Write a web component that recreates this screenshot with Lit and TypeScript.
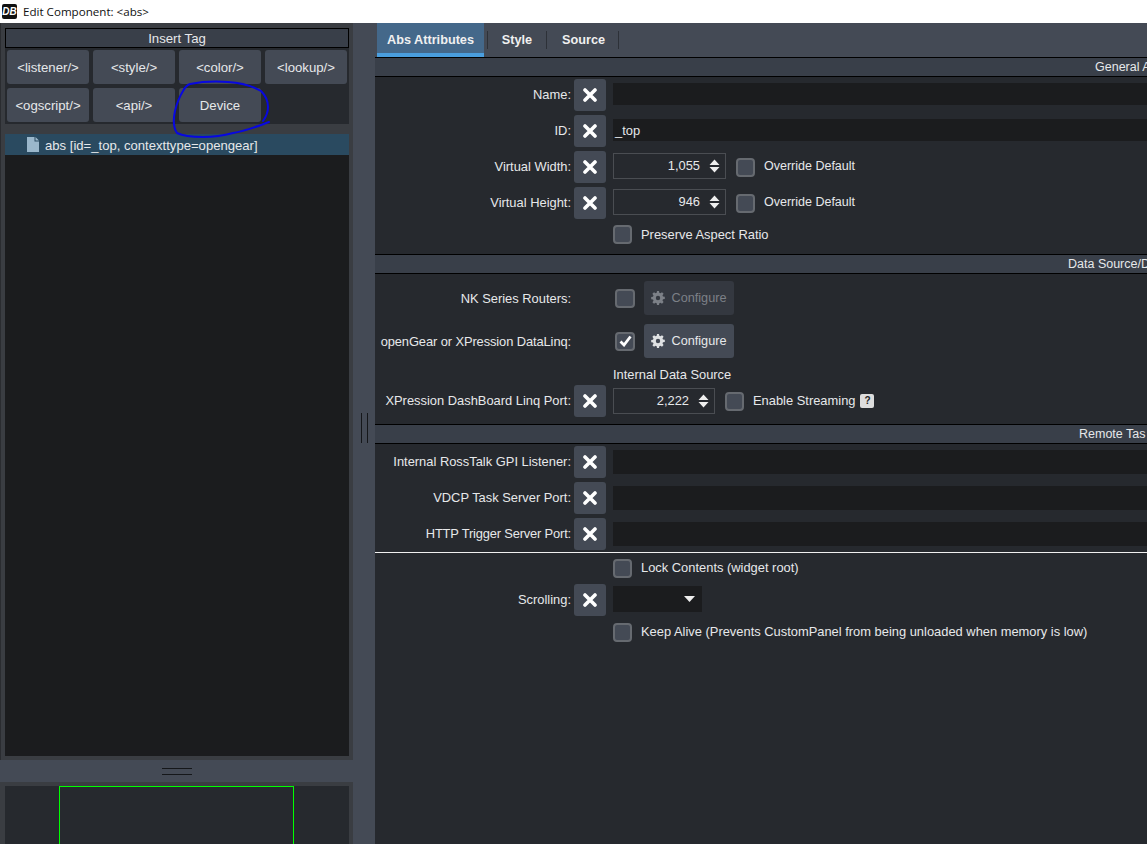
import { LitElement, html, css, svg } from "lit";
import { customElement } from "lit/decorators.js";

const xIcon = html`<svg width="14" height="14" viewBox="0 0 14 14"><path d="M2 2 L12 12 M12 2 L2 12" stroke="#fff" stroke-width="3.6" stroke-linecap="round"/></svg>`;
const gearPath = svg`<path fill-rule="evenodd" d="M6 0h2l.3 1.8 1.2.5L11 1.2l1.6 1.6-1.1 1.5.5 1.2 1.8.3v2.2l-1.8.3-.5 1.2 1.1 1.5L11 12.8l-1.5-1.1-1.2.5L8 14H6l-.3-1.8-1.2-.5L3 12.8 1.4 11.2l1.1-1.5-.5-1.2L.2 8.200V6l1.800-.3.5-1.200L1.400 2.800 3 1.200l1.500 1.100 1.200-.5zM7 4.800a2.200 2.200 0 1 0 0 4.400 2.200 2.200 0 0 0 0-4.400z"/>`;

@customElement("app-root")
export class AppRoot extends LitElement {
  static styles = css`
    :host { display: block; width: 1147px; height: 844px; overflow: hidden; position: relative; background: #26292e; font-family: "Liberation Sans", Arial, sans-serif; font-size: 12.900px; color: #e6e8ea; }
    .title { height: 23px; background: #fff; color: #111; display: flex; align-items: center; font-family: "Open Sans", sans-serif; font-size: 11.600px; }
    .logo { width: 15px; height: 15px; margin: 0 6px 0 2px; background: #111; border-radius: 2px; color: #fff; font: italic bold 10px/15px "Liberation Sans", sans-serif; text-align: center; }
    .main { display: flex; height: 821px; }
    .left { width: 353px; display: flex; flex-direction: column; flex: none; }
    .vsplit { width: 22px; flex: none; background: #444a55; display: flex; align-items: center; justify-content: center; gap: 5px; padding-bottom: 11px; box-sizing: border-box; }
    .vsplit i { width: 1px; height: 30px; background: #15171a; }
    .right { flex: 1; min-width: 0; overflow: hidden; }
    .top { height: 737px; box-sizing: border-box; background: #3a3d42; padding: 5px 4px 4px 4px; display: flex; flex-direction: column; border-left: 1px solid #2a2c30; }
    .ins { height: 20px; box-sizing: border-box; border: 1px solid #000; background: #393f49; text-align: center; line-height: 19px; font-size: 13.200px; }
    .grid { height: 76px; box-sizing: border-box; background: #26292e; padding: 2px; display: grid; grid-template-columns: repeat(4, 82px); grid-auto-rows: 34px; gap: 4px; }
    .tag { background: #444a55; border-radius: 3px; display: flex; align-items: center; justify-content: center; font-size: 13.200px; padding-top: 1px; box-sizing: border-box; }
    .tree { margin-top: 10px; flex: 1; background: #1b1c1e; }
    .sel { height: 21px; background: #2a4a60; display: flex; align-items: center; padding-left: 22px; gap: 6px; font-size: 13.100px; }
    .sel span { padding-top: 1px; }
    .hsplit { height: 22px; background: #444a55; display: flex; flex-direction: column; align-items: center; justify-content: center; gap: 5px; }
    .hsplit i { width: 30px; height: 1px; background: #15171a; }
    .bottom { flex: 1; background: #3a3d42; padding: 4px 4px 0 5px; display: flex; }
    .canvas { flex: 1; background: #26292e; padding-left: 54px; }
    .view { width: 235px; height: 100%; box-sizing: border-box; border: 1px solid #0f0; border-bottom: 0; }
    .tabs { height: 34px; background: #444a55; display: flex; padding-left: 2px; font-weight: bold; font-size: 12.700px; color: #f0f0f0; }
    .tab { display: flex; align-items: center; box-sizing: border-box; height: 34px; position: relative; }
    .tab.on { width: 107px; justify-content: center; background: #44688a; border-bottom: 4px solid #4a9ede; padding-top: 4px; }
    .tab.style { width: 60px; margin-left: 3px; justify-content: center; border-left: 1px solid #2d3138; border-right: 1px solid #2d3138; height: 18px; align-self: center; }
    .tab.src { width: 72px; justify-content: center; border-right: 1px solid #2d3138; height: 18px; align-self: center; padding-left: 2px; }
    .sec { height: 20px; box-sizing: border-box; border-top: 1px solid #000; border-bottom: 1px solid #000; background: #393f49; line-height: 18px; white-space: nowrap; font-size: 12.500px; overflow: hidden; }
    .s1 { padding-left: 720px; } .s2 { padding-left: 693px; margin-top: 10px; } .s3 { padding-left: 704px; margin-top: 7px; }
    .rows { padding-top: 2px; display: flex; flex-direction: column; gap: 4px; }
    .row { display: grid; grid-template-columns: 196px 32px 1fr; column-gap: 3px; align-items: center; height: 32px; }
    .lb { text-align: right; white-space: nowrap; }
    .row .lb { padding-bottom: 2px; }
    .lb.tight { letter-spacing: -0.100px; }
    .lb.tighter { letter-spacing: -0.170px; }
    .x { width: 32px; height: 32px; background: #444a55; border-radius: 3px; display: flex; align-items: center; justify-content: center; }
    .f { margin-left: 4px; display: flex; align-items: center; min-width: 0; }
    .f > .txt { padding-bottom: 2px; }
    .txt.nar { font-size: 12.500px; }
    .inp { flex: 1; height: 22px; background: #1b1c1e; margin-top: -2px; padding-left: 2px; line-height: 24px; }
    .inp.t { height: 24px; margin-top: 0; }
    .spin { height: 26px; width: 113px; box-sizing: border-box; border: 1px solid #4a4d52; margin-top: -2px; display: flex; align-items: center; justify-content: flex-end; gap: 9px; padding-right: 5px; }
    .spin.p { width: 102px; margin-top: 0; }
    .spin span { margin-top: -1px; }
    .ar { display: block; }
    .cb { width: 19px; height: 19px; box-sizing: border-box; border: 2px solid #666a70; background: #444a55; border-radius: 4px; flex: none; display: flex; align-items: center; justify-content: center; }
    .f .cb { margin: 0 9px 0 10px; }
    .solo { height: 20px; display: flex; align-items: center; padding-left: 238px; margin-top: 5px; gap: 9px; }
    .conf { height: 34px; display: grid; grid-template-columns: 196px 1fr; align-items: center; column-gap: 44px; }
    .conf .inner { display: flex; align-items: center; gap: 9px; }
    .conf .cb { width: 20px; }
    .conf.a { margin-top: 7px; } .conf.b { margin-top: 9px; }
    .btn { width: 90px; height: 34px; background: #444a55; border-radius: 3px; display: flex; align-items: center; justify-content: center; gap: 6px; fill: #dfe1e3; font-size: 12.700px; }
    .btn.off { background: #343840; color: #7c8087; fill: #7c8087; }
    .ids { height: 16px; margin: 9px 0 2px 238px; line-height: 16px; }
    .q { width: 14px; height: 14px; margin-left: 5px; background: #ddd; color: #222; font-weight: bold; font-size: 10px; line-height: 14px; text-align: center; border-radius: 2px; }
    .hr { height: 1px; background: #f0f0f0; margin-top: 2px; }
    .sel2 { width: 89px; height: 26px; background: #1b1c1e; display: flex; justify-content: flex-end; align-items: center; padding-right: 7px; box-sizing: border-box; margin-top: -2px; }
    .lock { margin-top: 5px; }
    .mt6 { margin-top: 6px; }
    .up { margin-top: -2px; }
    .ink { position: absolute; left: 0; top: 0; pointer-events: none; }
  `;

  private btnRow(label: string, body: unknown, cls = "") {
    return html`<div class="row"><div class="lb ${cls}">${label}</div><div class="x">${xIcon}</div><div class="f">${body}</div></div>`;
  }

  private arrows() {
    return html`<svg class="ar" width="11" height="14" viewBox="0 0 11 14"><path d="M5.500 0.500L10.500 6H.5zM.5 8h10l-5 5.500z" fill="#eee"/></svg>`;
  }

  private spin(v: string, p = false) {
    return html`<div class="spin ${p ? "p" : ""}"><span>${v}</span>${this.arrows()}</div>`;
  }

  private gear() {
    return html`<svg width="14" height="14" viewBox="0 0 14 14">${gearPath}</svg>`;
  }

  render() {
    const tags = ["<listener/>", "<style/>", "<color/>", "<lookup/>", "<ogscript/>", "<api/>", "Device"];
    return html`
      <div class="title"><span class="logo">DB</span>Edit Component: &lt;abs&gt;</div>
      <div class="main">
        <div class="left">
          <div class="top">
            <div class="ins">Insert Tag</div>
            <div class="grid">${tags.map((t) => html`<div class="tag">${t}</div>`)}</div>
            <div class="tree">
              <div class="sel">
                <svg width="12" height="15" viewBox="0 0 12 15"><path d="M0 0h7.500v4.500H12V15H0zM8.500 0L12 3.500H8.500z" fill="#9ab7cb"/></svg>
                <span>abs [id=_top, contexttype=opengear]</span>
              </div>
            </div>
          </div>
          <div class="hsplit"><i></i><i></i></div>
          <div class="bottom"><div class="canvas"><div class="view"></div></div></div>
        </div>
        <div class="vsplit"><i></i><i></i></div>
        <div class="right">
          <div class="tabs">
            <div class="tab on">Abs Attributes</div>
            <div class="tab style">Style</div>
            <div class="tab src">Source</div>
          </div>
          <div class="sec s1">General A</div>
          <div class="rows">
            ${this.btnRow("Name:", html`<div class="inp"></div>`)}
            ${this.btnRow("ID:", html`<div class="inp">_top</div>`)}
            ${this.btnRow("Virtual Width:", html`${this.spin("1,055")}<span class="cb"></span><span class="txt nar">Override Default</span>`)}
            ${this.btnRow("Virtual Height:", html`${this.spin("946")}<span class="cb"></span><span class="txt nar">Override Default</span>`)}
          </div>
          <div class="solo"><span class="cb"></span><span>Preserve Aspect Ratio</span></div>
          <div class="sec s2">Data Source/D</div>
          <div class="conf a"><div class="lb">NK Series Routers:</div><div class="inner"><span class="cb"></span><div class="btn off">${this.gear()}<span>Configure</span></div></div></div>
          <div class="conf b"><div class="lb tight">openGear or XPression DataLinq:</div><div class="inner"><span class="cb"><svg width="13" height="12" viewBox="0 0 13 12"><path d="M1.500 6.500L5 10l6.500-8.500" fill="none" stroke="#fff" stroke-width="2.800"/></svg></span><div class="btn">${this.gear()}<span>Configure</span></div></div></div>
          <div class="ids">Internal Data Source</div>
          ${this.btnRow("XPression DashBoard Linq Port:", html`${this.spin("2,222", true)}<span class="cb"></span><span class="txt">Enable Streaming</span><span class="q">?</span>`)}
          <div class="sec s3">Remote Tas</div>
          <div class="rows">
            ${this.btnRow("Internal RossTalk GPI Listener:", html`<div class="inp t"></div>`)}
            ${this.btnRow("VDCP Task Server Port:", html`<div class="inp t"></div>`)}
            ${this.btnRow("HTTP Trigger Server Port:", html`<div class="inp t"></div>`, "tighter")}
          </div>
          <div class="hr"></div>
          <div class="solo lock"><span class="cb"></span><span class="up">Lock Contents (widget root)</span></div>
          <div class="mt6">${this.btnRow("Scrolling:", html`<div class="sel2"><svg width="11" height="6" viewBox="0 0 11 6"><path d="M0 0h11L5.500 6z" fill="#eee"/></svg></div>`)}</div>
          <div class="solo mt6"><span class="cb"></span><span class="up">Keep Alive (Prevents CustomPanel from being unloaded when memory is low)</span></div>
        </div>
      </div>
      <svg class="ink" width="400" height="160" viewBox="0 0 400 160"><path d="M269 122C258 126 246 131 233 133C222 136 212 137 203 137C193 137 183 136 177 133C173 127 173 120 175 111C177 102 180 96 183 91C185 87 187 85 190 84C200 82 215 81 228 82C243 83 254 87 261 91C266 96 268 101 268 107C268 113 266 117 263 121" fill="none" stroke="#0808e0" stroke-width="2" stroke-linecap="round"/></svg>
    `;
  }
}
